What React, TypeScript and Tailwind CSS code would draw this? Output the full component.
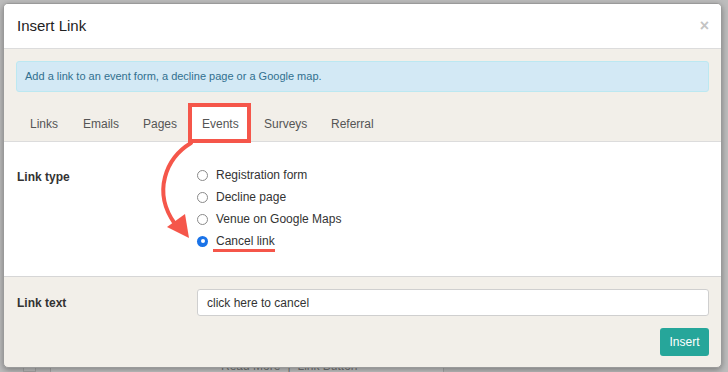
const tabs = [
  { label: "Links", width: "w-[53px]" },
  { label: "Emails", width: "w-[60px]" },
  { label: "Pages", width: "w-[59px]" },
  { label: "Events", width: "w-[62px]" },
  { label: "Surveys", width: "w-[67px]" },
  { label: "Referral", width: "w-[66px]" },
];

const linkTypes = [
  { label: "Registration form", checked: false },
  { label: "Decline page", checked: false },
  { label: "Venue on Google Maps", checked: false },
  { label: "Cancel link", checked: true },
];

function Radio({ checked }: { checked: boolean }) {
  if (checked) {
    return (
      <span className="flex h-[11px] w-[11px] items-center justify-center rounded-full bg-[#1a73e8]">
        <span className="h-[4px] w-[4px] rounded-full bg-white" />
      </span>
    );
  }
  return <span className="h-[11px] w-[11px] rounded-full border border-[#8a8a8a] bg-white" />;
}

export default function App() {
  return (
    <div
      className="relative h-[372px] w-[728px] overflow-hidden bg-[#bdbdbd] text-[#333]"
      style={{ fontFamily: '"Liberation Sans", Arial, sans-serif' }}
    >
      {/* page behind the modal */}
      <div className="absolute bottom-0 left-[23px] h-[20px] w-[13px] border border-[#a8a8a8] bg-[#c2c2c2]" />
      <div className="absolute bottom-0 left-[50px] h-[20px] w-[394px] border-x border-[#a8a8a8] bg-[#c6c6c6]">
        <div className="mt-[7px] flex gap-[7px] pl-[170px] text-[12px] leading-[14px] text-[#777]">
          <span>Read More</span>
          <span>|</span>
          <span>Link Button</span>
        </div>
      </div>

      {/* Modal */}
      <div className="relative ml-[3px] mt-[3px] w-[719px] overflow-hidden rounded-[5px] border border-[#9a9a9a] bg-[#f2efe9] shadow-[0_2px_6px_rgba(0,0,0,0.35)]">
        {/* Header */}
        <div className="flex h-[45px] items-center justify-between border-b border-[#dcdcdc] bg-white pl-[13px] pr-[12px]">
          <h4 className="text-[15px] text-[#222]">Insert Link</h4>
          <span className="text-[16px] font-bold leading-none text-[#c4c4c4]">×</span>
        </div>

        {/* Info + tabs */}
        <div className="pt-[12px]">
          <div className="mx-[12px] flex h-[31px] items-center rounded-[3px] border border-[#bce8f1] bg-[#d3e9f5] px-[8px] text-[11px] text-[#31708f]">
            Add a link to an event form, a decline page or a Google map.
          </div>
          <div className="mt-[13px] flex h-[37px] border-b border-[#dcdcdc] pl-[13px]">
            {tabs.map((tab) => (
              <div
                key={tab.label}
                className={
                  tab.label === "Events"
                    ? `flex ${tab.width} items-center bg-white pl-[13px] pt-[1px] text-[12px] text-[#555]`
                    : `flex ${tab.width} items-center pl-[13px] pt-[1px] text-[12px] text-[#555]`
                }
              >
                {tab.label}
              </div>
            ))}
          </div>
        </div>

        {/* Link type */}
        <div className="flex h-[135px] border-b border-[#d6d6d6] bg-white pt-[26px]">
          <div className="w-[180px] pl-[13px] pt-[2px] text-[12px] font-bold leading-[14px] text-[#333]">Link type</div>
          <div className="flex flex-col gap-[8px] pl-[13px]">
            {linkTypes.map((t) => (
              <div key={t.label} className="flex h-[14px] items-center gap-[8px] text-[12px] text-[#333]">
                <Radio checked={t.checked} />
                <span>{t.label}</span>
              </div>
            ))}
          </div>
        </div>

        {/* Link text + action */}
        <div className="px-[12px] pb-[11px] pt-[12px]">
          <div className="flex items-center">
            <div className="w-[181px] pl-[1px] text-[12px] font-bold text-[#333]">Link text</div>
            <div className="flex h-[27px] flex-1 items-center rounded-[3px] border border-[#cfcfcf] bg-white px-[9px] text-[12px] text-[#333]">
              click here to cancel
            </div>
          </div>
          <div className="mt-[12px] flex justify-end">
            <button className="h-[28px] w-[49px] rounded-[3px] bg-[#26a69a] text-[12px] text-white">Insert</button>
          </div>
        </div>
      </div>

      {/* Annotation overlay */}
      <svg className="pointer-events-none absolute left-0 top-0" width="728" height="372" viewBox="0 0 728 372">
        <rect x="190" y="105" width="59" height="36" fill="none" stroke="#f5564a" strokeWidth="4" />
        <path d="M191 143 C 166 158, 152 192, 175 224" fill="none" stroke="#f5564a" strokeWidth="4" strokeLinecap="round" />
        <polygon points="167,227 185,214 189,238" fill="#f5564a" />
        <rect x="213" y="249" width="62" height="3" fill="#f5564a" />
      </svg>
    </div>
  );
}
